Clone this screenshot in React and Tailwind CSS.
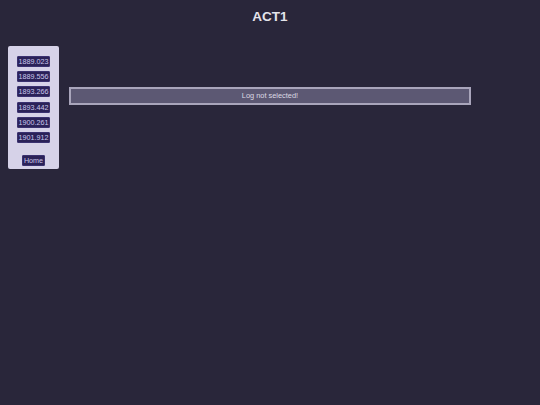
const logs = ['1889.023', '1889.556', '1893.266', '1893.442', '1900.261', '1901.912']

function LogButton({ label }) {
  return (
    <button className="block h-[11px] px-[0.5px] bg-[#2b2258] text-[#cbc6ec] text-[7.2px] leading-[9px] rounded-[1px] border border-[#3a3170]">
      {label}
    </button>
  )
}

export default function App() {
  return (
    <div className="min-h-[405px] w-[540px] bg-[#29263a] font-['Liberation_Sans',Arial,sans-serif] relative">
      <h1 className="pt-[8px] text-center text-[13.5px] font-bold text-[#e4e3ea] leading-[17px]">ACT1</h1>
      <div className="flex items-start mt-[21px] pl-[8px]">
        <aside className="w-[51px] bg-[#d6d2e8] rounded-[2px] pt-[10px] pb-[3px] flex flex-col items-center">
          <div className="flex flex-col items-center gap-[4.2px]">
            {logs.map((l) => (
              <LogButton key={l} label={l} />
            ))}
          </div>
          <div className="mt-[12px] flex">
            <LogButton label="Home" />
          </div>
        </aside>
        <main className="ml-[10px] mt-[41px] w-[402px]">
          <div className="h-[18px] border-2 border-[#a9a5bb] bg-[#5c5873] text-[#dcdae4] text-[7.4px] flex items-center justify-center">
            Log not selected!
          </div>
        </main>
      </div>
    </div>
  )
}
